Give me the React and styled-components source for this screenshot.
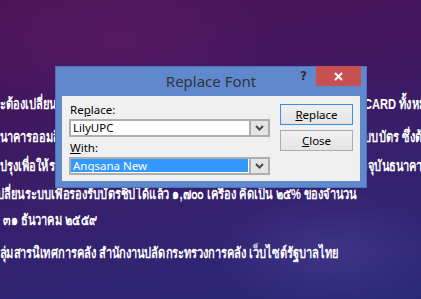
import React from 'react';
import styled, { createGlobalStyle } from 'styled-components';

const GlobalStyle = createGlobalStyle`
    html, body {
        margin: 0;
        padding: 0;
        width: 421px;
        height: 299px;
        overflow: hidden;
    }
`;

const Slide = styled.div`
    position: relative;
    width: 421px;
    height: 299px;
    overflow: hidden;
    background:
        radial-gradient(ellipse 120px 60px at 330px 250px, rgba(90, 80, 170, 0.35), transparent),
        radial-gradient(ellipse 160px 80px at 120px 40px, rgba(110, 30, 110, 0.35), transparent),
        linear-gradient(170deg, #4b1457 0%, #42175f 30%, #36206c 60%, #2a2978 100%);
`;

// the slide's Thai font is a narrow one, so the block is squeezed sideways
const TextBlock = styled.div`
    display: flex;
    flex-direction: column;
    padding-top: 94px;
    margin-left: -7px;
    transform: scaleX(0.74);
    transform-origin: 0 0;
    font-family: "Liberation Sans", "Noto Sans", sans-serif;
    font-weight: bold;
    font-size: 15px;
    color: #ffffff;
    white-space: nowrap;
`;

const Line = styled.div`
    height: 20px;
    line-height: 20px;
    margin-top: ${p => p.$space || 0}px;
    padding-left: ${p => p.$indent || 0}px;
`;

const Dialog = styled.div`
    position: absolute;
    left: 55px;
    top: 66px;
    width: 310px;
    height: 120px;
    border: 1px solid #4d72b8;
    background: #6088cd;
    display: flex;
    flex-direction: column;
    font-family: "Noto Sans", "Open Sans", sans-serif;
`;

const TitleBar = styled.div`
    height: 29px;
    display: grid;
    grid-template-columns: 1fr auto 1fr;
    align-items: start;
`;

const Title = styled.div`
    grid-column: 2;
    font-size: 15px;
    line-height: 29px;
    color: #2f3640;
`;

const Controls = styled.div`
    grid-column: 3;
    justify-self: end;
    display: flex;
    align-items: flex-start;
    margin-top: -1px;
    margin-right: 5px;
`;

const Help = styled.span`
    font-family: "DejaVu Sans", sans-serif;
    font-weight: bold;
    font-size: 12px;
    color: #2a2e36;
    margin: 3px 9px 0 0;
`;

const CloseBox = styled.div`
    width: 45px;
    height: 20px;
    background: #c75050;
    display: flex;
    align-items: center;
    justify-content: center;
`;

const Panel = styled.div`
    flex: 1;
    margin: 0 6px 6px;
    background: #f0f0f0;
    display: flex;
    padding: 5px 7px 0;
`;

const Fields = styled.div`
    width: 201px;
    display: flex;
    flex-direction: column;
`;

const Label = styled.div`
    height: 18px;
    line-height: 18px;
    font-size: 11.5px;
    color: #000;
    padding-left: 1px;
    margin-top: ${p => p.$space || 0}px;
`;

const Combo = styled.div`
    height: 14px;
    border: 2px solid #adadad;
    display: flex;
    background: #fff;
`;

const Field = styled.div`
    flex: 1;
    margin: ${p => (p.$selected ? '0 1px 1px 0' : '0')};
    background: ${p => (p.$selected ? '#3399ff' : '#fff')};
    color: ${p => (p.$selected ? '#fff' : '#000')};
    font-size: 11.5px;
    line-height: 14px;
    padding-left: 2px;
`;

const DropButton = styled.div`
    width: 17px;
    border-left: 2px solid #adadad;
    background: #e4e4e4;
    display: flex;
    align-items: center;
    justify-content: center;
`;

const Buttons = styled.div`
    margin-left: 10px;
    width: 73px;
    display: flex;
    flex-direction: column;
    gap: 5px;
    padding-top: 3px;
`;

const Button = styled.div`
    height: 19px;
    border: 1px solid ${p => (p.$primary ? '#3c8ee0' : '#acacac')};
    background: linear-gradient(#f0f0f0, #e5e5e5);
    font-size: 11.5px;
    line-height: 19px;
    text-align: center;
    color: #000;
`;

const U = styled.span`
    text-decoration: underline;
    text-underline-offset: 1px;
`;

const Chevron = () => (
    <svg width="9" height="6" viewBox="0 0 9 6">
        <path d="M1 1 L4.5 4.5 L8 1" stroke="#4a4a4a" strokeWidth="2" fill="none" />
    </svg>
);

export default function App() {
    return (
        <>
            <GlobalStyle />
            <Slide>
                <TextBlock>
                    <Line>จะต้องเปลี่ยนบัตรเอทีเอ็มเป็นบัตรชิปการ์ดมาตรฐานไทย TPN, หรือบัตรที่ TOPCARD ทั้งหมด</Line>
                    <Line $space={13}>ธนาคารออมสินและธนาคารพาณิชย์ได้ทยอยเปลี่ยนบัตรให้แก่ลูกค้าทั้งหมดสู่ระบบบัตร ซึ่งต้อง</Line>
                    <Line $space={9} $indent={9}>ปรุงเพื่อให้รองรับการใช้งานบัตรชิปการ์ดใหม่ของธนาคารทุกแห่งก็ครบแล้ว ปัจจุบันธนาคาร</Line>
                    <Line $space={8}>เปลี่ยนระบบเพื่อรองรับบัตรชิปได้แล้ว ๑,๗๐๐ เครื่อง คิดเป็น ๒๕% ของจำนวน</Line>
                    <Line $space={6} $indent={14}>๓๑ ธันวาคม ๒๕๕๙</Line>
                    <Line $space={13}>กลุ่มสารนิเทศการคลัง สำนักงานปลัดกระทรวงการคลัง เว็บไซต์รัฐบาลไทย</Line>
                </TextBlock>
                <Dialog>
                    <TitleBar>
                        <Title>Replace Font</Title>
                        <Controls>
                            <Help>?</Help>
                            <CloseBox>
                                <svg width="9" height="9" viewBox="0 0 9 9">
                                    <path d="M1 1 L8 8 M8 1 L1 8" stroke="#fff" strokeWidth="2" />
                                </svg>
                            </CloseBox>
                        </Controls>
                    </TitleBar>
                    <Panel>
                        <Fields>
                            <Label>Re<U>p</U>lace:</Label>
                            <Combo>
                                <Field>LilyUPC</Field>
                                <DropButton><Chevron /></DropButton>
                            </Combo>
                            <Label $space={2}><U>W</U>ith:</Label>
                            <Combo>
                                <Field $selected>Angsana New</Field>
                                <DropButton><Chevron /></DropButton>
                            </Combo>
                        </Fields>
                        <Buttons>
                            <Button $primary><U>R</U>eplace</Button>
                            <Button><U>C</U>lose</Button>
                        </Buttons>
                    </Panel>
                </Dialog>
            </Slide>
        </>
    );
}
